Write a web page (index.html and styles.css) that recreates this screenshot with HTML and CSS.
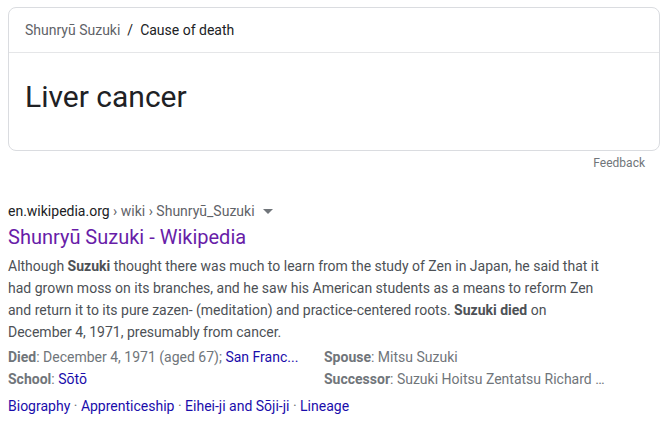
FILE: index.html
```html
<!DOCTYPE html>
<html>
<head>
<meta charset="utf-8">
<link rel="stylesheet" href="styles.css">
</head>
<body>
<div class="page">
  <div class="card">
    <div class="card-head">
      <span class="crumb-muted">Shunryū Suzuki</span><span class="crumb-sep">/</span><span class="crumb-main">Cause of death</span>
    </div>
    <div class="card-body">Liver cancer</div>
  </div>
  <div class="feedback-row"><span class="feedback">Feedback</span></div>

  <div class="result">
    <div class="url">en.wikipedia.org <span class="url-path">› wiki › Shunryū_Suzuki</span>
      <svg class="caret" width="10" height="10" viewBox="0 0 10 10"><path d="M0 3h10L5 8z" fill="#70757a"/></svg>
    </div>
    <a class="title">Shunryū Suzuki - Wikipedia</a>
    <div class="snippet">Although <b>Suzuki</b> thought there was much to learn from the study of Zen in Japan, he said that it had grown moss on its branches, and he saw his American students as a means to reform Zen and return it to its pure zazen- (meditation) and practice-centered roots. <b>Suzuki died</b> on December 4, 1971, presumably from cancer.</div>
    <div class="facts">
      <div class="fact"><b>Died</b>: December 4, 1971 (aged 67); <a class="link">San Franc...</a></div>
      <div class="fact"><b>Spouse</b>: Mitsu Suzuki</div>
      <div class="fact"><b>School</b>: <a class="link">Sōtō</a></div>
      <div class="fact"><b>Successor</b>: Suzuki Hoitsu Zentatsu Richard …</div>
    </div>
    <div class="sitelinks">
      <a class="link">Biography</a><span class="dot"> · </span><a class="link">Apprenticeship</a><span class="dot"> · </span><a class="link">Eihei-ji and Sōji-ji</a><span class="dot"> · </span><a class="link">Lineage</a>
    </div>
  </div>
</div>
</body>
</html>
```

FILE: styles.css
```css
* { box-sizing: border-box; }
html, body {
  margin: 0;
  padding: 0;
  background: #fff;
  font-family: Roboto, "Liberation Sans", Arial, sans-serif;
}
.page {
  padding: 7px 7px 0 8px;
}
.card {
  border: 1px solid #dadce0;
  border-radius: 8px;
  height: 144px;
}
.card-head {
  height: 45px;
  border-bottom: 1px solid #e5e6e8;
  padding-left: 16px;
  font-size: 14px;
  line-height: 44px;
  color: #202124;
}
.crumb-muted { color: #5f6368; }
.crumb-sep { margin: 0 7px; color: #202124; }
.card-body {
  padding: 26px 16px 0;
  font-size: 30px;
  line-height: 36px;
  color: #202124;
}
.feedback-row {
  display: flex;
  justify-content: flex-end;
  padding-right: 15px;
  margin-top: 4px;
}
.feedback {
  font-size: 12px;
  line-height: 16px;
  color: #70757a;
}
.result {
  margin-top: 29px;
  width: 600px;
}
.url {
  font-size: 14px;
  line-height: 22px;
  color: #202124;
  display: flex;
  align-items: center;
  white-space: pre;
}
.url-path { color: #5f6368; }
.caret { margin-left: 8px; }
.title {
  display: block;
  margin-top: 2px;
  font-size: 20px;
  line-height: 26px;
  color: #681da8;
}
.snippet {
  margin-top: 5px;
  font-size: 14px;
  line-height: 22px;
  color: #4d5156;
}
.snippet b { color: #4d5156; font-weight: bold; }
.facts {
  margin-top: 3px;
  display: grid;
  grid-template-columns: 316px 284px;
  font-size: 14px;
  line-height: 22px;
  color: #70757a;
}
.fact {
  white-space: nowrap;
  overflow: hidden;
}
.fact b { font-weight: bold; color: #70757a; }
.link { color: #1a0dab; }
.sitelinks {
  margin-top: 5px;
  font-size: 14px;
  line-height: 22px;
  white-space: nowrap;
}
.dot { color: #70757a; }
```
